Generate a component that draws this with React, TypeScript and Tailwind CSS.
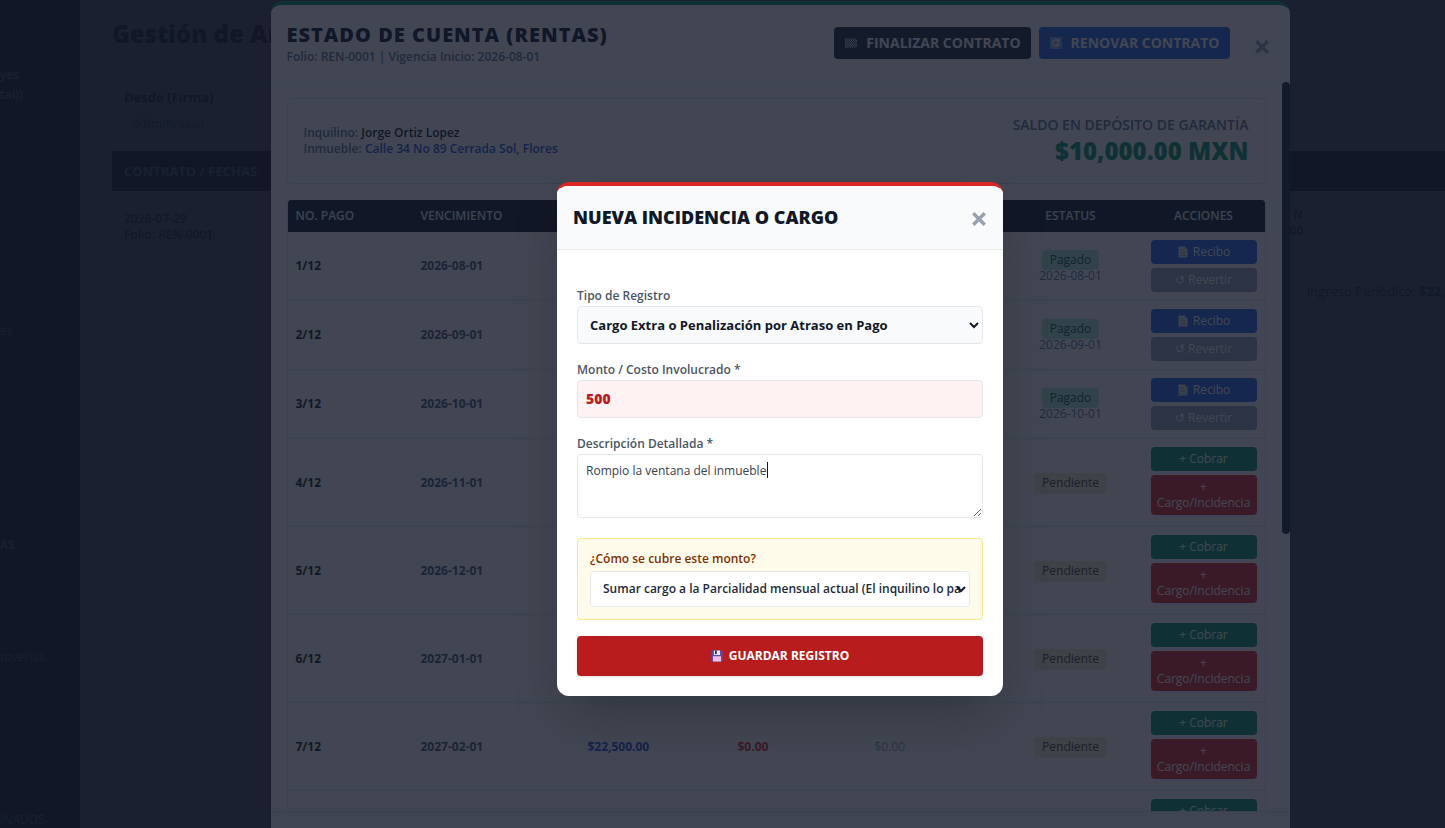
import React from 'react';

type Payment = {
    num?: string;
    due?: string;
    paid?: boolean;
    rent?: string;
    charges?: string;
    credits?: string;
};

const payments: Payment[] = [
    { num: '1/12', due: '2026-08-01', paid: true },
    { num: '2/12', due: '2026-09-01', paid: true },
    { num: '3/12', due: '2026-10-01', paid: true },
    { num: '4/12', due: '2026-11-01' },
    { num: '5/12', due: '2026-12-01' },
    { num: '6/12', due: '2027-01-01' },
    { num: '7/12', due: '2027-02-01', rent: '$22,500.00', charges: '$0.00', credits: '$0.00' },
    {},
];

function FlagIcon() {
    return (
        <svg className="h-[14px] w-[14px]" viewBox="0 0 14 14" aria-hidden="true">
            {Array.from({ length: 70 }, (_, i) => {
                const col = i % 10;
                const row = Math.floor(i / 10);
                return (
                    <rect key={i} x={1 + col * 1.2} y={2.5 + row * 1.3} width="1.2" height="1.3" fill={(col + row) % 2 ? '#334155' : '#ffffff'} />
                );
            })}
        </svg>
    );
}

function RenewIcon() {
    return (
        <svg className="h-[14px] w-[14px]" viewBox="0 0 14 14" aria-hidden="true">
            <rect x="1" y="1" width="12" height="12" rx="1" fill="#7fa8e0" />
            <path d="M9.6 5A3.2 3.2 0 1 0 10 7.8H7.4M9.8 3.2V5.4H7.4" fill="none" stroke="#fff" strokeWidth="1.3" />
        </svg>
    );
}

function PageIcon() {
    return (
        <svg className="h-3 w-3" viewBox="0 0 12 12" aria-hidden="true">
            <path d="M1.5 0.5H8L10.5 3V11.5H1.5Z" fill="#e2e8f0" />
            <path d="M8 0.5V3H10.5Z" fill="#94a3b8" />
            <path d="M3 3.5H7M3 5.5H9M3 7.5H9M3 9.5H9" stroke="#94a3b8" strokeWidth="0.8" />
        </svg>
    );
}

function DiskIcon() {
    return (
        <svg className="h-3 w-3" viewBox="0 0 12 12" aria-hidden="true">
            <path d="M0.5 0.5H10.5L11.5 1.5V11.5H0.5Z" fill="#5b4fa8" />
            <rect x="3" y="0.5" width="6" height="4.5" fill="#e5e7eb" />
            <rect x="4" y="0.5" width="1.8" height="3.6" fill="#312e63" />
            <rect x="2" y="6.3" width="8" height="5.2" fill="#f5c6ec" />
            <path d="M2 8H10M2 9.7H10" stroke="#dba3d6" strokeWidth="0.4" />
        </svg>
    );
}

function CloseIcon({ className }: { className: string }) {
    return (
        <svg className={className} viewBox="0 0 14 14" aria-hidden="true">
            <path d="M2 2L12 12M12 2L2 12" stroke="currentColor" strokeWidth="3" />
        </svg>
    );
}

function Background() {
    return (
        <div className="flex h-full">
            <aside className="flex w-20 flex-col bg-[#111827] text-xs leading-4 text-slate-300">
                <p className="mt-[65px] leading-5 font-semibold text-white">yes<br />tal))</p>
                <p className="mt-[218px]">es</p>
                <p className="mt-[198px] font-bold">AS</p>
                <p className="mt-24">toverías</p>
                <p className="mt-[147px]">INADOS</p>
            </aside>
            <main className="min-w-0 flex-1 bg-slate-100 pt-5 pl-8 text-[13px] leading-4">
                <h1 className="text-2xl leading-7 font-extrabold text-slate-900">Gestión de Ar</h1>
                <div className="mt-[41px] px-3">
                    <label htmlFor="desde" className="block font-bold text-slate-900">Desde (Firma)</label>
                    <input id="desde" type="text" placeholder="dd/mm/aaaa" className="mt-1 h-7 w-28 px-2 text-xs placeholder:text-slate-600" />
                </div>
                <table className="mt-[14px] w-full text-left">
                    <thead className="bg-[#111827] text-slate-200">
                        <tr className="h-10">
                            <th className="px-3">CONTRATO / FECHAS</th>
                            <th />
                        </tr>
                    </thead>
                    <tbody>
                        <tr className="text-xs leading-4 font-semibold text-slate-800">
                            <td className="px-3 pt-5">2026-07-29<br />Folio: REN-0001</td>
                            <td className="pt-3 pr-[142px] text-right">N<br />00</td>
                        </tr>
                    </tbody>
                </table>
                <p className="mt-10 text-right whitespace-nowrap text-slate-800">
                    Ingreso Periódico: <b className="text-blue-900">$22,</b>
                </p>
            </main>
        </div>
    );
}

function PaymentRow({ payment }: { payment: Payment }) {
    const { num, due, paid, rent, charges, credits } = payment;
    return (
        <tr className="border-b border-slate-200">
            <td className="px-2 font-bold text-slate-900">{num}</td>
            <td className="px-2 font-bold text-slate-600">{due}</td>
            <td className="px-2 font-bold text-[#1d4ed8]">{rent}</td>
            <td className="px-2 font-bold text-[#dc2626]">{charges}</td>
            <td className="px-2 text-slate-400">{credits}</td>
            <td className="px-2 text-center">
                {paid && (
                    <>
                        <span className="inline-block rounded-sm bg-[#b5ead7] px-2 leading-5 text-emerald-900">Pagado</span>
                        <div className="leading-3 text-slate-500">{due}</div>
                    </>
                )}
                {!paid && num && (
                    <span className="inline-block rounded-sm bg-[#f3ecc8] px-2 leading-5 text-stone-700">Pendiente</span>
                )}
            </td>
            <td className={paid ? 'px-2 py-2' : 'px-2 pt-2 pb-[11px]'}>
                <div className="flex flex-col gap-1 text-white">
                    {paid ? (
                        <>
                            <button className="flex items-center justify-center gap-1 rounded bg-[#2563eb] py-1"><PageIcon /> Recibo</button>
                            <button className="rounded bg-slate-400 py-1">↺ Revertir</button>
                        </>
                    ) : (
                        <>
                            <button className="rounded bg-[#059669] py-1">+ Cobrar</button>
                            {num && <button className="rounded bg-[#dc2626] py-1">+<br />Cargo/Incidencia</button>}
                        </>
                    )}
                </div>
            </td>
        </tr>
    );
}

function AccountModal() {
    return (
        <section className="flex h-[calc(100vh+40px)] w-[1019px] shrink-0 flex-col overflow-hidden rounded-xl border-t-4 border-[#059669] bg-white">
            <header className="flex h-[77px] shrink-0 justify-between border-b border-slate-100 px-4 pt-[18px]">
                <div>
                    <h2 className="text-xl leading-6 font-extrabold tracking-wider text-slate-900">ESTADO DE CUENTA (RENTAS)</h2>
                    <p className="mt-[2px] text-xs leading-4 font-semibold text-slate-500">Folio: REN-0001 | Vigencia Inicio: 2026-08-01</p>
                </div>
                <div className="flex items-start gap-2 pt-1 text-sm font-bold text-white">
                    <button className="flex h-8 items-center gap-2 rounded bg-slate-800 px-[10px]"><FlagIcon /> FINALIZAR CONTRATO</button>
                    <button className="flex h-8 items-center gap-2 rounded bg-[#2563eb] px-[10px]"><RenewIcon /> RENOVAR CONTRATO</button>
                    <button aria-label="Cerrar" className="mt-2 ml-3 p-1 text-slate-400"><CloseIcon className="h-4 w-4" /></button>
                </div>
            </header>
            <div className="flex min-h-0 flex-1 overflow-hidden">
                <div className="min-w-0 flex-1 p-4">
                    <div className="flex h-[86px] items-center justify-between rounded border border-slate-200 px-4">
                        <div className="text-xs leading-4 font-semibold text-slate-500">
                            <p>Inquilino: <span className="text-slate-900">Jorge Ortiz Lopez</span></p>
                            <p>Inmueble: <span className="text-[#1d4ed8]">Calle 34 No 89 Cerrada Sol, Flores</span></p>
                        </div>
                        <div className="text-right">
                            <p className="text-sm leading-5 font-semibold text-slate-500">SALDO EN DEPÓSITO DE GARANTÍA</p>
                            <p className="text-2xl leading-8 font-extrabold text-[#059669]">$10,000.00 MXN</p>
                        </div>
                    </div>
                    <div className="mt-4 overflow-hidden rounded-t border-x border-slate-200">
                        <table className="w-full table-fixed border-collapse text-xs leading-4">
                            <thead className="bg-[#111827] text-slate-200">
                                <tr className="h-8">
                                    <th className="w-[125px] px-2 text-left font-semibold">NO. PAGO</th>
                                    <th className="w-[167px] px-2 text-left font-semibold">VENCIMIENTO</th>
                                    <th className="w-[150px]" />
                                    <th className="w-[137px]" />
                                    <th />
                                    <th className="w-36 px-2 font-semibold">ESTATUS</th>
                                    <th className="w-[122px] px-2 font-semibold">ACCIONES</th>
                                </tr>
                            </thead>
                            <tbody>
                                {payments.map((p, i) => <PaymentRow key={i} payment={p} />)}
                            </tbody>
                        </table>
                    </div>
                </div>
                <div className="w-2">
                    <div className="h-[62%] rounded-full bg-slate-800" />
                </div>
            </div>
            <footer className="h-[58px] shrink-0 border-t border-slate-200 bg-slate-50" />
        </section>
    );
}

function IncidentModal() {
    return (
        <section className="w-[446px] overflow-hidden rounded-xl border-t-4 border-[#dc2626] bg-white shadow-2xl">
            <header className="flex h-16 items-center justify-between border-b border-gray-200 bg-gray-50 px-4">
                <h2 className="text-lg leading-6 font-extrabold text-gray-900">NUEVA INCIDENCIA O CARGO</h2>
                <button aria-label="Cerrar" className="mt-1 text-gray-400"><CloseIcon className="h-4 w-4" /></button>
            </header>
            <form className="flex flex-col px-5 pt-[38px] pb-5" onSubmit={(e) => e.preventDefault()}>
                <label htmlFor="tipo" className="mb-[2px] text-xs leading-4 font-semibold text-gray-600">Tipo de Registro</label>
                <select id="tipo" className="mb-[18px] h-[38px] rounded border border-gray-200 bg-gray-50 p-2 text-[13px] font-bold text-gray-900">
                    <option>Cargo Extra o Penalización por Atraso en Pago</option>
                </select>
                <label htmlFor="monto" className="mb-[2px] text-xs leading-4 font-semibold text-gray-600">Monto / Costo Involucrado *</label>
                <input id="monto" type="text" defaultValue="500" className="mb-[18px] h-[38px] rounded border border-gray-200 bg-red-50 p-2 text-sm font-extrabold text-[#b91c1c]" />
                <label htmlFor="desc" className="mb-[2px] text-xs leading-4 font-semibold text-gray-600">Descripción Detallada *</label>
                <div className="relative mb-5 flex">
                    <textarea
                        id="desc"
                        defaultValue="Rompio la ventana del inmueble"
                        className="h-16 w-full rounded border border-gray-200 p-2 text-xs leading-4 text-gray-700 caret-transparent outline-none"
                    />
                    {/* text cursor */}
                    <span className="absolute top-2 left-[190px] h-4 w-px bg-gray-900" />
                </div>
                <div className="mb-4 flex flex-col rounded-sm border border-amber-200 bg-amber-50 p-3">
                    <label htmlFor="cubre" className="mb-1 text-xs leading-4 font-semibold text-amber-900">¿Cómo se cubre este monto?</label>
                    <div className="relative">
                        <select id="cubre" className="h-9 w-full appearance-none rounded border border-gray-200 bg-white pr-2 pl-3 text-xs font-semibold text-gray-800">
                            <option>Sumar cargo a la Parcialidad mensual actual (El inquilino lo paga)</option>
                        </select>
                        <svg className="pointer-events-none absolute top-[14px] right-1 h-2 w-[10px]" viewBox="0 0 10 8" aria-hidden="true">
                            <path d="M1 2L5 6L9 2" fill="none" stroke="#111827" strokeWidth="2" />
                        </svg>
                    </div>
                </div>
                <button type="submit" className="flex h-10 items-center justify-center gap-[6px] rounded bg-[#b91c1c] text-xs font-bold text-white shadow">
                    <DiskIcon /> GUARDAR REGISTRO
                </button>
            </form>
        </section>
    );
}

export default function App() {
    return (
        <div className="relative h-screen overflow-hidden font-['Open_Sans','Noto_Sans',sans-serif]">
            <Background />
            <div className="absolute inset-0 flex justify-center bg-[#111827]/80 pt-px pl-[115px]">
                <AccountModal />
            </div>
            <div className="absolute inset-0 flex items-center justify-center bg-[#111827]/80 pt-[49px] pl-[115px]">
                <IncidentModal />
            </div>
        </div>
    );
}
